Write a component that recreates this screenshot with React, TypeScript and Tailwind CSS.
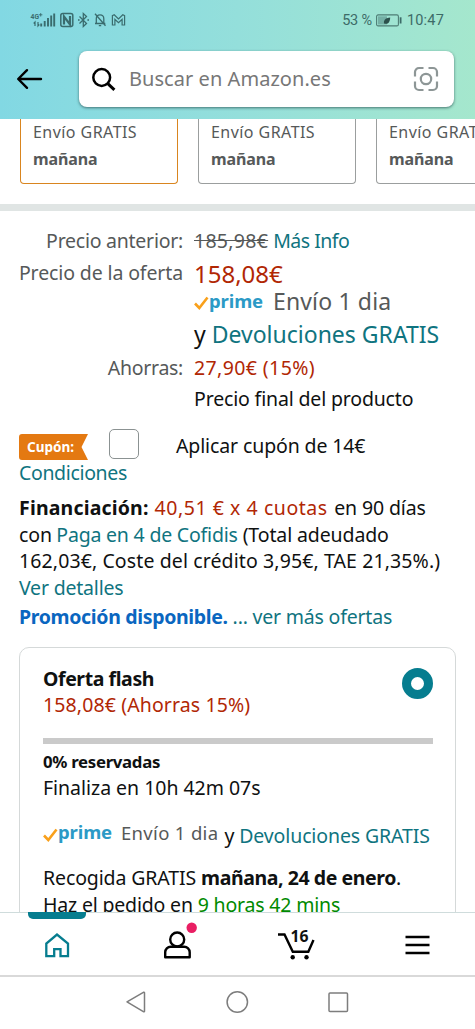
import React from "react";

const StatusBar = () => {
  return (
    <div className="flex h-[40px] items-center justify-between pl-[30px] pr-[31px] font-[Roboto,sans-serif] text-[14.5px] text-[#3d6b68]">
      <svg width="98" height="18" viewBox="30 11 98 18" fill="none" stroke="#3a6c6e">
        <text x="30.5" y="18.8" fontSize="7.5" fontWeight="700" fill="#3a6c6e" stroke="none" textLength="8.5" lengthAdjust="spacingAndGlyphs">4G</text>
        <path d="M39 14.8h3.4M40.7 13.1v3.4" strokeWidth="0.9" />
        <path d="M35 26v-4l-1.3 1.5M38 22v4l1.3-1.5" strokeWidth="1.2" />
        <path d="M41.2 26.5v-3M44.7 26.5v-5.5M48 26.5v-8.5M51.2 26.5v-11M54.2 26.5v-13" strokeWidth="1.9" />
        {/* nfc */}
        <rect x="60.8" y="13.6" width="12" height="12.8" rx="2" strokeWidth="1.5" />
        <path d="M64 24.5v-8l6 8v-8.5" strokeWidth="2.2" />
        {/* bluetooth */}
        <path d="M79.5 16.5l7 7-3.2 3V13.5l3.2 3-7 7" strokeWidth="1.3" />
        <path d="M78 20h1.6M87.4 20H89" strokeWidth="1.5" />
        {/* muted bell */}
        <path d="M96.3 23.5v-4.8c0-2.4 1.4-3.9 3.7-3.9s3.8 1.5 3.8 3.9v4.8zM95 23.5h10.3M98.8 25.6h2.4M95 13.7l10.5 12" strokeWidth="1.3" />
        {/* mail */}
        <path d="M112.4 25V15.6l1.8-.8 4.3 4.1 4.3-4.1 1.8.8V25h-2.5v-5.6l-3.6 3.2-3.6-3.2V25z" strokeWidth="1.2" />
      </svg>
      <div className="flex items-center pt-[1px]">
        <span className="tracking-[-0.2px]">53 %</span>
        <svg className="ml-[4px] mr-[5px]" width="26" height="13" viewBox="0 0 26 13">
          <rect x="0.6" y="0.9" width="21.8" height="11" rx="1.5" fill="none" stroke="#4d7c74" strokeWidth="1.1" />
          <rect x="2" y="2.3" width="9" height="8.2" fill="#74b0a5" />
          <path d="M8 9.5c-.5-3 1-5.5 6.2-6-.2 4.5-2 6.7-5 6.3z" fill="#2c514c" />
          <path d="M24.6 3.3v6.2" stroke="#3d6b68" strokeWidth="1.8" />
        </svg>
        <span className="tracking-[0.2px]">10:47</span>
      </div>
    </div>
  );
};

const SearchHeader = () => {
  return (
    <header className="h-[119px] shrink-0 bg-linear-to-r from-[#82d8e3] via-[#94dfdb] to-[#a5e7cd]">
      <StatusBar />
      <div className="flex items-center pl-[16px] pt-[11px]">
        <svg width="27" height="22" viewBox="0 0 27 22" fill="none" stroke="#000" strokeWidth="2.4" strokeLinecap="round" strokeLinejoin="round">
          <path d="M2.5 11H25M11 2.2L2.2 11l8.8 8.8" />
        </svg>
        <div className="ml-[36px] flex h-[56px] w-[375px] items-center rounded-lg bg-white pl-[12px] pr-[15px] shadow-[0_1px_3px_rgba(40,80,80,0.75)]">
          <svg width="25" height="25" viewBox="0 0 25 25" fill="none" stroke="#000">
            <circle cx="10.7" cy="10.5" r="8.4" strokeWidth="2.5" />
            <path d="M16.8 16.6l6.6 6.2" strokeWidth="3" />
          </svg>
          <span className="ml-[13px] grow text-[20px] tracking-[0.05px] text-[#777]">Buscar en Amazon.es</span>
          <svg width="26" height="26" viewBox="0 0 26 26" fill="none" stroke="#8d9696" strokeWidth="2.2">
            <path d="M2 10.5V6a4 4 0 0 1 4-4h4.5M15.5 2H20a4 4 0 0 1 4 4v4.5M24 15.5V20a4 4 0 0 1-4 4h-4.5M10.5 24H6a4 4 0 0 1-4-4v-4.5" />
            <circle cx="13" cy="13" r="5.2" />
          </svg>
        </div>
      </div>
    </header>
  );
};

const OfferTile = ({ selected = false }: { selected?: boolean }) => {
  return (
    <div
      className={`w-[158px] shrink-0 rounded-b-[4px] border border-t-0 pl-[12px] text-[16px] leading-[27px] text-[#565959] ${
        selected ? "border-[#d9851f]" : "border-[#9b9e9e]"
      }`}
    >
      <p className="tracking-[0.45px] whitespace-nowrap">Envío GRATIS</p>
      <p className="font-bold tracking-[-0.1px]">mañana</p>
    </div>
  );
};

const PrimeLogo = () => {
  return (
    <span className="flex items-center">
      <svg className="mt-[4px]" width="15" height="15" viewBox="0 0 15 15" fill="none" stroke="#f9a01b" strokeWidth="2.6">
        <path d="M1 7.5l4.3 4.5L13.5 1.5" />
      </svg>
      <span className="-mt-[2px] text-[18.5px] font-bold text-[#2b9ac6]">prime</span>
    </span>
  );
};

const PriceTable = () => {
  return (
    <div className="pt-[14px] text-[19.5px] tracking-[-0.12px] text-[#565959]">
      <div className="flex h-[32px] leading-[32px]">
        <span className="w-[183px] text-right tracking-[-0.25px]">Precio anterior:</span>
        <span className="ml-[11px] tracking-[0.28px] line-through">185,98€</span>
        <span className="ml-[5px] tracking-[-0.5px] text-[#0f7480]">Más Info</span>
      </div>
      <div className="flex h-[32px] leading-[32px]">
        <span className="w-[183px] text-right">Precio de la oferta</span>
        <span className="ml-[11px] text-[24px] leading-[34px] tracking-normal text-[#b12704]">158,08€</span>
      </div>
      <div className="flex h-[25px] items-center pl-[194px] leading-[25px]">
        <PrimeLogo />
        <span className="ml-[10px] text-[23px] tracking-[0.15px]">Envío 1 dia</span>
      </div>
      <p className="pl-[194px] text-[23px] leading-[41px] tracking-normal text-[#0f1111]">
        y <span className="text-[#0f7480]">Devoluciones GRATIS</span>
      </p>
      <div className="flex h-[26px] leading-[26px]">
        <span className="w-[183px] text-right tracking-[-0.3px]">Ahorras:</span>
        <span className="ml-[11px] tracking-[0.4px] text-[#b12704]">27,90€ (15%)</span>
      </div>
      <p className="pl-[194px] leading-[36px] tracking-[-0.16px] text-[#0f1111]">Precio final del producto</p>
    </div>
  );
};

const Coupon = () => {
  return (
    <div className="px-[19px] text-[19.5px] tracking-[-0.12px]">
      <div className="flex h-[42px] pt-[12px]">
        <div className="relative mt-[5px] h-[26px] w-[69px]">
          <svg className="absolute inset-0" width="69" height="26" viewBox="0 0 69 26">
            <path d="M3 0H69L62.5 13 69 26H3a3 3 0 0 1-3-3V3a3 3 0 0 1 3-3z" fill="#e47911" />
          </svg>
          <span className="relative block pl-[8px] text-[13.5px] leading-[26px] font-bold tracking-normal text-white">Cupón:</span>
        </div>
        <span className="ml-[21px] size-[30px] rounded-[5px] border border-[#8b9292] bg-white"></span>
        <span className="ml-[37px] leading-[34px] text-[#0f1111]">Aplicar cupón de 14€</span>
      </div>
      <p className="leading-[27px] tracking-[-0.35px] text-[#0f7480]">Condiciones</p>
    </div>
  );
};

const Financing = () => {
  return (
    <div className="pl-[19px] pt-[9px] text-[19.5px] leading-[26.7px] tracking-[-0.12px] whitespace-nowrap text-[#0f1111]">
      <p>
        <b className="mr-[1px] tracking-[0.17px]">Financiación:</b>{" "}
        <span className="mr-[1.5px] tracking-[0.55px] text-[#b12704]">40,51 € x 4 cuotas</span> en 90 días
      </p>
      <p>
        con <span className="-ml-[0.5px] tracking-[-0.2px] text-[#0f7480]">Paga en 4 de Cofidis</span> (Total adeudado
      </p>
      <p className="tracking-[0.11px]">162,03€, Coste del crédito 3,95€, TAE 21,35%.)</p>
      <p className="tracking-[-0.2px] text-[#0f7480]">Ver detalles</p>
      <p className="pt-[2.3px] tracking-[-0.2px] text-[#0f7480]">
        <b className="tracking-[-0.34px] text-[#0a66c0]">Promoción disponible.</b> ... ver más ofertas
      </p>
    </div>
  );
};

const FlashDeal = () => {
  return (
    <div className="ml-[19px] mt-[16px] h-[300px] w-[437px] rounded-[10px] border border-[#d5d9d9] pl-[23px] pr-[22px] text-[19.5px] tracking-[-0.12px] whitespace-nowrap text-[#0f1111]">
      <div className="flex justify-between pt-[18px] leading-[26.5px]">
        <div>
          <p className="font-bold tracking-[-0.42px]">Oferta flash</p>
          <p className="tracking-[0.12px] text-[#b12704]">158,08€ (Ahorras 15%)</p>
        </div>
        <span className="mt-[2px] size-[31px] rounded-full border-[9.5px] border-[#067d8f] bg-white"></span>
      </div>
      <div className="mt-[19px] h-[6px] bg-[#cacaca]"></div>
      <p className="mt-[5.5px] text-[16.8px] leading-[26px] font-bold tracking-[-0.3px]">0% reservadas</p>
      <p className="leading-[26px] tracking-[-0.03px]">Finaliza en 10h 42m 07s</p>
      <div className="mt-[18px] flex h-[28px] items-center">
        <PrimeLogo />
        <span className="ml-[9px] text-[18.5px] tracking-[0.33px] text-[#565959]">Envío 1 dia</span>
        <span className="ml-[6px] pt-[5px] tracking-[-0.12px]">
          y <span className="text-[#0f7480]">Devoluciones GRATIS</span>
        </span>
      </div>
      <p className="mt-[18px] leading-[26.5px]">
        Recogida GRATIS <b className="tracking-[-0.42px]">mañana, 24 de enero</b>.
      </p>
      <p className="leading-[26.5px] tracking-[-0.18px]">
        Haz el pedido en <span className="text-[#008a00]">9 horas 42 mins</span>
      </p>
    </div>
  );
};

const BottomNav = () => {
  return (
    <nav className="relative h-[65px] shrink-0 border-t border-[#cfdcdc] border-b-2 border-b-[#d9d9d9] bg-white">
      <div className="absolute left-[28px] top-[-1px] h-[7px] w-[58px] rounded-b-[5px] bg-[#067d8f]"></div>
      <svg width="475" height="62" viewBox="0 913 475 62" fill="none">
        {/* home */}
        <path d="M46.3 956.2V943.5L57 934.6l11 8.9v12.7h-7.5v-7h-6.3v7z" stroke="#067d8f" strokeWidth="2.3" />
        {/* account */}
        <circle cx="177.2" cy="939.5" r="7" stroke="#000" strokeWidth="2.4" />
        <path d="M165.2 957.2v-5a5.5 5.5 0 0 1 5.5-5.5h13.5a5.5 5.5 0 0 1 5.5 5.5v5z" stroke="#000" strokeWidth="2.4" strokeLinejoin="round" />
        <circle cx="191.7" cy="927.7" r="5.2" fill="#e91e63" />
        {/* cart */}
        <path d="M278 934.5h6.5l8.3 17.200h15.5l5.200-11.700" stroke="#000" strokeWidth="2.4" />
        <circle cx="292.7" cy="957.3" r="2.2" fill="#000" />
        <circle cx="306.5" cy="957.3" r="2.2" fill="#000" />
        <text x="290.5" y="941.8" fontSize="16" fontWeight="700" fill="#0f1111" textLength="18" lengthAdjust="spacingAndGlyphs">16</text>
        {/* menu */}
        <path d="M405.5 937h24M405.5 945h24M405.5 953h24" stroke="#000" strokeWidth="2.5" />
      </svg>
    </nav>
  );
};

const SystemBar = () => {
  return (
    <div className="h-[52px] shrink-0 bg-white">
      <svg width="475" height="52" viewBox="0 977 475 52" fill="none" stroke="#7d7d7d" strokeWidth="1.5">
        <path d="M127 1001.9L143.8 992.2a.6.6 0 0 1 .7.6v18.4a.6.6 0 0 1-.7.6z" strokeLinejoin="round" />
        <circle cx="237.3" cy="1002" r="10.2" />
        <rect x="329" y="993" width="18.5" height="18.5" rx="1" />
      </svg>
    </div>
  );
};

const App = () => {
  return (
    <div className="flex h-[1029px] w-[475px] flex-col overflow-hidden bg-white font-['Noto_Sans',sans-serif]">
      <SearchHeader />
      <main className="h-[793px] shrink-0 overflow-hidden">
        {/* OFFERS */}
        <div className="flex h-[65px] gap-[20px] overflow-hidden pl-[20px]">
          <OfferTile selected />
          <OfferTile />
          <OfferTile />
        </div>
        <div className="mt-[20px] h-[7px] bg-[#e0e5e4]"></div>
        <PriceTable />
        <Coupon />
        <Financing />
        <FlashDeal />
      </main>
      <BottomNav />
      <SystemBar />
    </div>
  );
};

export default App;
